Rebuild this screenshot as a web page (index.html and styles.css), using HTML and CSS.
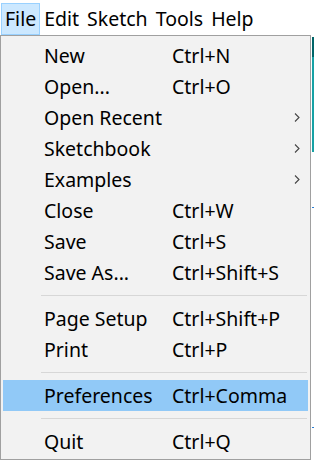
FILE: index.html
```html
<!DOCTYPE html>
<html lang="en">
<head>
    <meta charset="UTF-8">
    <meta name="viewport" content="width=device-width, initial-scale=1.0">
    <title>File menu</title>
    <link rel="stylesheet" href="styles.css">
</head>
<body>
    <div class="menubar">
        <span class="menubar-item menubar-item-open">File</span>
        <span class="menubar-item">Edit</span>
        <span class="menubar-item">Sketch</span>
        <span class="menubar-item">Tools</span>
        <span class="menubar-item">Help</span>
    </div>

    <div class="below">
        <div class="menu">
            <div class="menu-item"><span class="label">New</span><span class="shortcut">Ctrl+N</span></div>
            <div class="menu-item"><span class="label">Open...</span><span class="shortcut">Ctrl+O</span></div>
            <div class="menu-item"><span class="label">Open Recent</span><span class="shortcut"></span><svg class="arrow" width="6" height="9" viewBox="0 0 6 9"><path d="M1 0.5 L5 4.5 L1 8.5" fill="none" stroke="#444" stroke-width="1.1"/></svg></div>
            <div class="menu-item"><span class="label">Sketchbook</span><span class="shortcut"></span><svg class="arrow" width="6" height="9" viewBox="0 0 6 9"><path d="M1 0.5 L5 4.5 L1 8.5" fill="none" stroke="#444" stroke-width="1.1"/></svg></div>
            <div class="menu-item"><span class="label">Examples</span><span class="shortcut"></span><svg class="arrow" width="6" height="9" viewBox="0 0 6 9"><path d="M1 0.5 L5 4.5 L1 8.5" fill="none" stroke="#444" stroke-width="1.1"/></svg></div>
            <div class="menu-item"><span class="label">Close</span><span class="shortcut">Ctrl+W</span></div>
            <div class="menu-item"><span class="label">Save</span><span class="shortcut">Ctrl+S</span></div>
            <div class="menu-item"><span class="label">Save As...</span><span class="shortcut">Ctrl+Shift+S</span></div>
            <div class="separator"></div>
            <div class="menu-item"><span class="label">Page Setup</span><span class="shortcut">Ctrl+Shift+P</span></div>
            <div class="menu-item"><span class="label">Print</span><span class="shortcut">Ctrl+P</span></div>
            <div class="separator"></div>
            <div class="menu-item menu-item-hover"><span class="label">Preferences</span><span class="shortcut">Ctrl+Comma</span></div>
            <div class="separator"></div>
            <div class="menu-item"><span class="label">Quit</span><span class="shortcut">Ctrl+Q</span></div>
        </div>
        <div class="window-edge">
            <div class="edge-dark"></div>
            <div class="edge-light"></div>
            <div class="edge-tick tick-1"></div>
            <div class="edge-tick tick-2"></div>
        </div>
    </div>
</body>
</html>
```

FILE: styles.css
```css
body {
    margin: 0;
    background: #fff;
    font-family: "Noto Sans", "Open Sans", sans-serif;
    font-size: 19.5px;
    color: #000;
    width: 314px;
    height: 463px;
    overflow: hidden;
}
.menubar {
    height: 35px;
    display: flex;
    align-items: flex-end;
    padding-left: 1px;
}
.menubar-item {
    height: 32px;
    line-height: 30px;
    padding: 0 3px 0 3px;
    margin-right: 0px;
    border: 1px solid transparent;
    box-sizing: border-box;
}
.menubar-item-open {
    background-color: #cce8ff;
    border-color: #99d1ff;
}
.below {
    display: flex;
}
.menu {
    width: 311px;
    box-sizing: border-box;
    border: 1px solid #a0a0a0;
    background-color: #f2f2f2;
    padding: 4px 2px 2px 2px;
}
.menu-item {
    height: 31px;
    display: flex;
    align-items: center;
    padding-left: 41px;
}
.menu-item .label {
    width: 128px;
}
.menu-item .shortcut {
    flex: 1;
}
.menu-item .arrow {
    margin-right: 8px;
}
.menu-item-hover {
    background-color: #91c9f7;
}
.separator {
    height: 15px;
    display: flex;
    align-items: center;
    margin-left: 38px;
    margin-right: 1px;
}
.separator::after {
    content: "";
    flex: 1;
    height: 1px;
    background-color: #d7d7d7;
}
.window-edge {
    flex: 1;
    position: relative;
}
.edge-dark {
    height: 20px;
    margin-top: 2px;
    margin-left: 1px;
    background-color: #006468;
}
.edge-light {
    height: 95px;
    margin-left: 1px;
    background-color: #17a1a5;
}
.edge-tick {
    position: absolute;
    left: 1px;
    width: 2px;
    height: 1px;
    background-color: #2a7fd4;
}
.tick-1 { top: 172px; }
.tick-2 { top: 392px; }
```
